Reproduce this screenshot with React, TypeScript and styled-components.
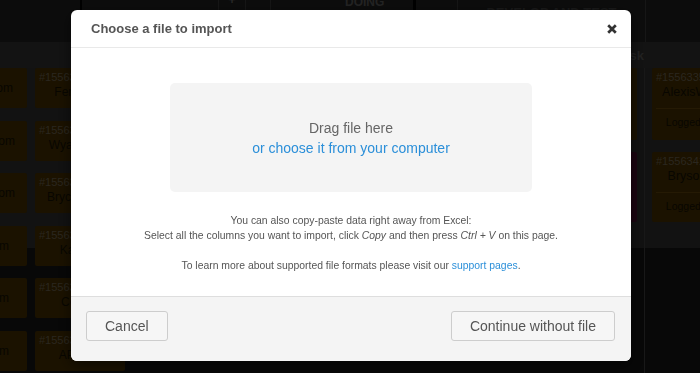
import React from "react";
import styled, { createGlobalStyle } from "styled-components";

const GlobalStyle = createGlobalStyle`
  html, body { margin: 0; padding: 0; background: #101010; }
  body { font-family: "Liberation Sans", Arial, sans-serif; }
  * { box-sizing: border-box; }
`;

/* ---------- board behind the dialog ---------- */

const Board = styled.div`
  width: 700px;
  height: 373px;
  overflow: hidden;
  display: flex;
  flex-direction: column;
  background: #282828;
`;

const TopBar = styled.div`
  display: flex;
  height: 42px;
  flex-shrink: 0;
  background: #202020;
`;

const HeadCell = styled.div<{ $w: number; $edge?: string; $pad?: number; $grow?: boolean }>`
  width: ${(p) => p.$w}px;
  flex-shrink: 0;
  flex-grow: ${(p) => (p.$grow ? 1 : 0)};
  height: 100%;
  border-left: ${(p) => p.$edge ?? "none"};
  display: flex;
  justify-content: ${(p) => (p.$pad !== undefined ? "flex-start" : "center")};
  padding-left: ${(p) => p.$pad ?? 0}px;
  align-items: flex-start;
  overflow: hidden;
`;

const HeadLabel = styled.span<{ $color: string; $top: number; $size: number }>`
  font-weight: bold;
  font-size: ${(p) => p.$size}px;
  line-height: 14px;
  color: ${(p) => p.$color};
  text-transform: uppercase;
  white-space: nowrap;
  margin-top: ${(p) => p.$top}px;
`;

const SubBar = styled.div`
  display: flex;
  height: 26px;
  flex-shrink: 0;
  background: #303030;
`;

const SubCell = styled.div<{ $w: number; $grow?: boolean }>`
  width: ${(p) => p.$w}px;
  flex-shrink: 0;
  flex-grow: ${(p) => (p.$grow ? 1 : 0)};
  display: flex;
  justify-content: flex-end;
  align-items: center;
  padding-right: 1px;
`;

const SubLabel = styled.span`
  font-weight: bold;
  font-size: 13px;
  color: #555555;
`;

const Lanes = styled.div`
  flex: 1;
  display: flex;
  overflow: hidden;
  background: linear-gradient(to bottom, #2d2d2d 0, #2d2d2d 180px, #141414 180px);
`;

const Column = styled.div<{ $w: number; $gap: number }>`
  width: ${(p) => p.$w}px;
  flex-shrink: 0;
  display: flex;
  flex-direction: column;
  gap: ${(p) => p.$gap}px;
`;

const Spacer = styled.div<{ $w: number; $line?: boolean }>`
  width: ${(p) => p.$w}px;
  flex-shrink: 0;
  border-right: ${(p) => (p.$line ? "1px solid #3c3c3c" : "none")};
`;

const Card = styled.div<{ $h: number; $tone?: "orange" | "magenta" }>`
  height: ${(p) => p.$h}px;
  flex-shrink: 0;
  background: ${(p) => (p.$tone === "magenta" ? "#450c2a" : "#442e00")};
  border-radius: 2px;
  display: flex;
  flex-direction: column;
  padding: 3px 4px;
  overflow: hidden;
`;

const CutCard = styled(Card)<{ $pad: number }>`
  justify-content: center;
  align-items: flex-end;
  padding: 0 ${(p) => p.$pad}px 0 0;
  border-radius: 0 2px 2px 0;
`;

const CardId = styled.div`
  font-size: 11px;
  line-height: 13px;
  color: #6a604c;
  white-space: nowrap;
`;

const CardName = styled.div<{ $size?: number }>`
  font-size: ${(p) => p.$size ?? 12}px;
  line-height: 16px;
  color: #151000;
  text-align: center;
  white-space: nowrap;
`;

const CardRule = styled.div`
  height: 1px;
  background: #5e410b;
  margin: 8px 0 6px;
`;

const CardFoot = styled.div`
  font-size: 10.5px;
  line-height: 14px;
  color: #151000;
  text-align: center;
  white-space: nowrap;
`;

/* ---------- dialog ---------- */

const Backdrop = styled.div`
  position: fixed;
  inset: 0;
  background: rgba(0, 0, 0, 0.6);
  display: flex;
  justify-content: center;
  align-items: flex-start;
  padding: 10px 0 0 2px;
`;

const Modal = styled.div`
  width: 560px;
  background: #ffffff;
  border-radius: 6px;
  overflow: hidden;
  box-shadow: 0 4px 14px rgba(0, 0, 0, 0.55);
  display: flex;
  flex-direction: column;
`;

const Header = styled.div`
  height: 38px;
  display: flex;
  align-items: center;
  justify-content: space-between;
  padding: 0 14px 0 20px;
  border-bottom: 1px solid #e9e9e9;
`;

const Title = styled.h3`
  margin: 0;
  font-size: 13px;
  font-weight: bold;
  color: #555555;
`;

const CloseButton = styled.button`
  border: 0;
  background: transparent;
  padding: 0;
  width: 10px;
  height: 10px;
  display: flex;
  cursor: pointer;
`;

const Body = styled.div`
  height: 248px;
  padding-top: 35px;
  display: flex;
  flex-direction: column;
  align-items: center;
`;

const DropZone = styled.div`
  width: 362px;
  height: 109px;
  background: #f4f4f4;
  border-radius: 5px;
  display: flex;
  flex-direction: column;
  align-items: center;
  justify-content: center;
  font-size: 14px;
  line-height: 20px;
`;

const DropText = styled.div`
  color: #666666;
`;

const DropLink = styled.a`
  color: #2b8fd9;
  text-decoration: none;
  cursor: pointer;
`;

const Help = styled.div`
  margin-top: 21px;
  font-size: 10.4px;
  line-height: 15px;
  color: #555555;
  text-align: center;
`;

const HelpPara = styled.p<{ $gap?: number }>`
  margin: ${(p) => p.$gap ?? 0}px 0 0;
`;

const HelpLink = styled.a`
  color: #2b8fd9;
  text-decoration: none;
`;

const Footer = styled.div`
  height: 65px;
  background: #f4f4f4;
  border-top: 1px solid #dedede;
  display: flex;
  justify-content: space-between;
  align-items: flex-start;
  padding: 14px 16px 0 15px;
`;

const Button = styled.button`
  height: 30px;
  padding: 0 18px;
  border: 1px solid #cdcdcd;
  border-radius: 3px;
  background: #f6f6f6;
  color: #555555;
  font-family: "Liberation Sans", Arial, sans-serif;
  font-size: 14px;
  cursor: pointer;
`;

const colB = [
  { id: "#1556301", name: "Fernando" },
  { id: "#1556302", name: "WyattHarris" },
  { id: "#1556303", name: "BrycenMiller" },
  { id: "#1556304", name: "Kayden" },
  { id: "#1556305", name: "Cordell" },
  { id: "#1556306", name: "APeters" },
];

const colA = [
  { name: "Tom", pad: 14 },
  { name: "Tom", pad: 12 },
  { name: "Tom", pad: 12 },
  { name: "Sam", pad: 18 },
  { name: "Sam", pad: 18 },
  { name: "Sam", pad: 18 },
];

const colD = [
  { id: "#1556335", name: "AlexisWilliams", foot: "Logged time 2h" },
  { id: "#1556341", name: "BrysonMiller", foot: "Logged time 4h" },
];

function CloseIcon() {
  return (
    <svg width="10" height="10" viewBox="0 0 10 10">
      <path d="M1.2 1.2 L8.8 8.8 M8.8 1.2 L1.2 8.8" stroke="#333" strokeWidth="2.7" strokeLinecap="butt" />
    </svg>
  );
}

export default function App() {
  return (
    <>
      <GlobalStyle />
      <Board>
        <TopBar>
          <HeadCell $w={80} />
          <HeadCell $w={138} $edge="2px solid #000" />
          <HeadCell $w={27} $edge="1px solid #383838">
            <HeadLabel $color="#666" $top={-7} $size={12}>+</HeadLabel>
          </HeadCell>
          <HeadCell $w={25} $edge="1px solid #383838" />
          <HeadCell $w={143} $edge="1px solid #383838" $pad={74}>
            <HeadLabel $color="#585858" $top={-5} $size={12}>Doing</HeadLabel>
          </HeadCell>
          <HeadCell $w={44} $edge="3px solid #000" />
          <HeadCell $w={188} $edge="1px solid #383838">
            <HeadLabel $color="#404040" $top={6} $size={13}>Develop and test</HeadLabel>
          </HeadCell>
          <HeadCell $w={55} $edge="1px solid #383838" $grow />
        </TopBar>
        <SubBar>
          <SubCell $w={645}>
            <SubLabel>Task</SubLabel>
          </SubCell>
          <SubCell $w={55} $grow />
        </SubBar>
        <Lanes>
          <Column $w={27} $gap={12.5}>
            {colA.map((c, i) => (
              <CutCard key={i} $h={40} $pad={c.pad}>
                <CardName>{c.name}</CardName>
              </CutCard>
            ))}
          </Column>
          <Spacer $w={8} />
          <Column $w={90} $gap={12.5}>
            {colB.map((c) => (
              <Card key={c.id} $h={40}>
                <CardId>{c.id}</CardId>
                <CardName>{c.name}</CardName>
              </Card>
            ))}
          </Column>
          <Spacer $w={420} />
          <Column $w={92} $gap={12}>
            <Card $h={72} />
            <Card $h={70} $tone="magenta" />
          </Column>
          <Spacer $w={8} $line />
          <Spacer $w={7} />
          <Column $w={100} $gap={12}>
            {colD.map((c, i) => (
              <Card key={c.id} $h={i === 0 ? 72 : 70}>
                <CardId>{c.id}</CardId>
                <CardName $size={12.5}>{c.name}</CardName>
                <CardRule />
                <CardFoot>{c.foot}</CardFoot>
              </Card>
            ))}
          </Column>
        </Lanes>
      </Board>

      <Backdrop>
        <Modal>
          <Header>
            <Title>Choose a file to import</Title>
            <CloseButton aria-label="Close">
              <CloseIcon />
            </CloseButton>
          </Header>
          <Body>
            <DropZone>
              <DropText>Drag file here</DropText>
              <DropLink>or choose it from your computer</DropLink>
            </DropZone>
            <Help>
              <HelpPara>You can also copy-paste data right away from Excel:</HelpPara>
              <HelpPara>
                Select all the columns you want to import, click <em>Copy</em> and then press{" "}
                <em>Ctrl + V</em> on this page.
              </HelpPara>
              <HelpPara $gap={15}>
                To learn more about supported file formats please visit our{" "}
                <HelpLink>support pages</HelpLink>.
              </HelpPara>
            </Help>
          </Body>
          <Footer>
            <Button>Cancel</Button>
            <Button>Continue without file</Button>
          </Footer>
        </Modal>
      </Backdrop>
    </>
  );
}
